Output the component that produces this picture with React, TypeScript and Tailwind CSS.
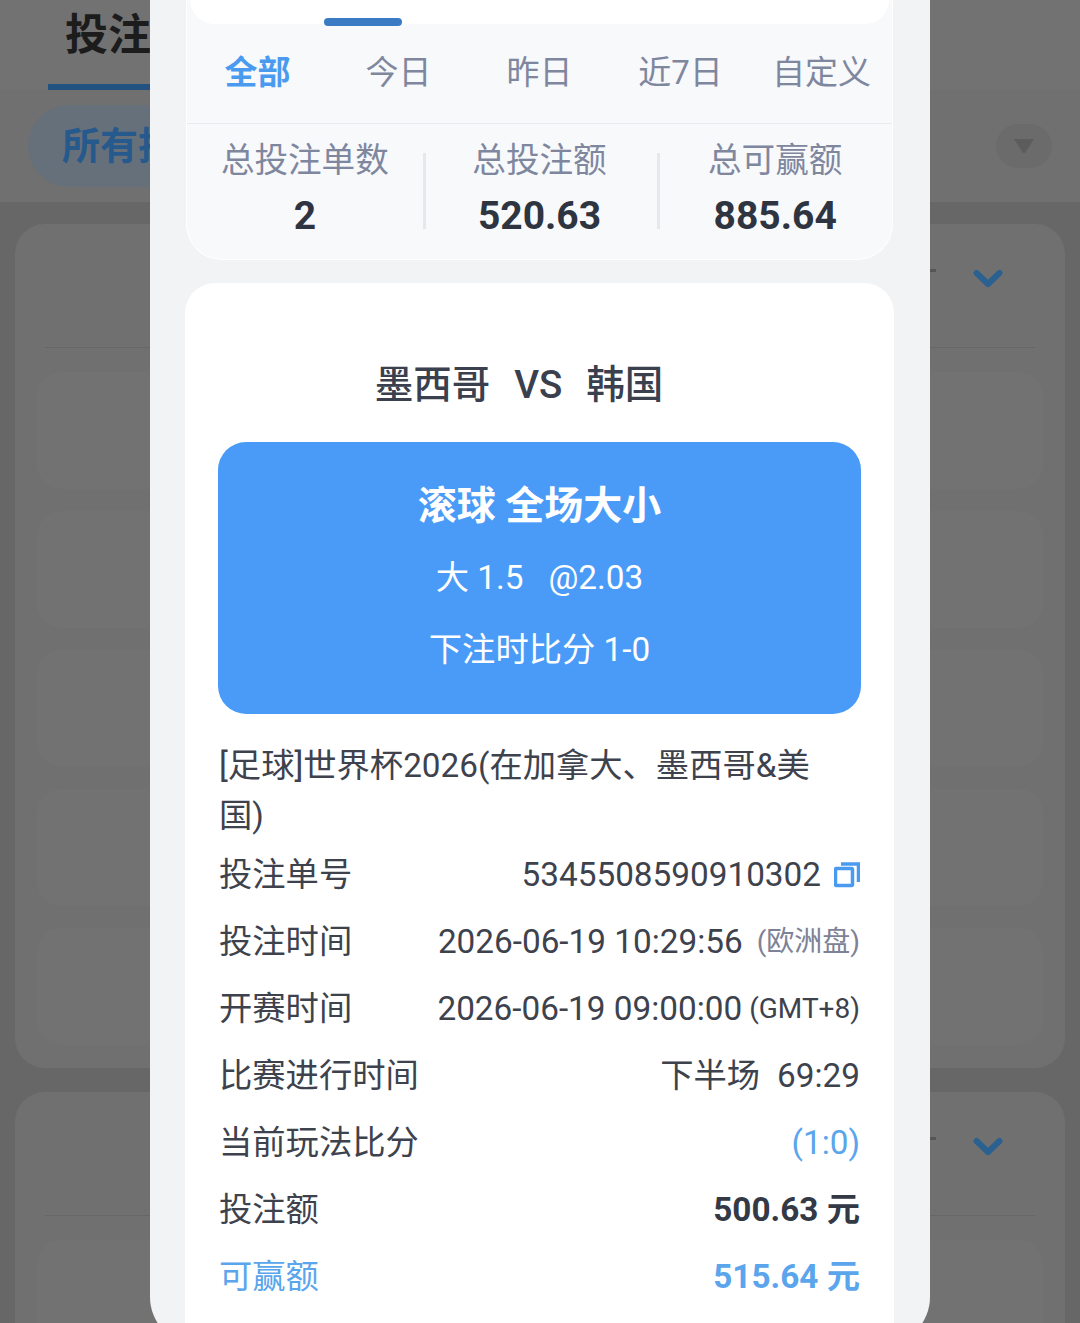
import React from 'react';

const tabs = ['全部', '今日', '昨日', '近7日', '自定义'];

const Chevron = () => (
  <svg width="30" height="20" viewBox="0 0 30 20" fill="none" stroke="#2a6191" strokeWidth="6" strokeLinecap="round" strokeLinejoin="round">
    <path d="M3.5 4l11.5 11L26.5 4" />
  </svg>
);

const CopyIcon = () => (
  <svg width="26" height="26" viewBox="0 0 26 26" fill="none" stroke="#4a9bf0" strokeWidth="3.5" className="ml-[13px]">
    <rect x="1.5" y="6.5" width="17" height="17" rx="1" />
    <path d="M7 2h17.5v18" />
  </svg>
);

const BackgroundCard = ({ rows }: { rows: number }) => (
  <div className="rounded-[30px] bg-[#707070] px-[22px] pb-[23px]">
    <div className="mx-[8px] flex h-[124px] items-start justify-end gap-[37px] border-b border-[#676767] pr-[32px] pt-[45px]">
      <div className="h-[3px] w-[8px] bg-[#555555]" />
      <Chevron />
    </div>
    <div className="flex flex-col gap-[22px] pt-[24px]">
      {Array.from({ length: rows }).map((_, i) => (
        <div key={i} className="h-[117px] rounded-[24px] bg-[#727272]" />
      ))}
    </div>
  </div>
);

const Row = ({ label, blue, children }: { label: string; blue?: boolean; children: React.ReactNode }) => (
  <div className={`flex h-[67px] items-center justify-between ${blue ? 'text-[#5aa5ec]' : 'text-[#3d424d]'}`}>
    <span>{label}</span>
    <div className="flex items-center">{children}</div>
  </div>
);

export default function App() {
  return (
    <div
      className="relative h-[1323px] w-[1080px] overflow-hidden bg-[#676768]"
      style={{ fontFamily: 'Roboto, "Noto Sans CJK SC", sans-serif' }}
    >
      {/* dimmed page behind the sheet */}
      <div className="h-[90px] bg-[#727272] pl-[48px]">
        <div className="h-[90px] w-[200px] whitespace-nowrap border-b-[6px] border-[#22527f] pl-[17px] text-[43px] font-bold leading-[70px] text-[#1c1c1c]">
          投注记录
        </div>
      </div>
      <div className="flex h-[112px] items-center justify-between bg-[#707070] pl-[28px] pr-[28px]">
        <div className="flex h-[82px] w-[300px] items-center whitespace-nowrap rounded-full bg-[#66707a] pl-[34px] text-[38px] font-bold text-[#26598c]">
          所有投注
        </div>
        <div className="flex h-[44px] w-[56px] items-center justify-center rounded-full bg-[#6b6b6b]">
          <svg width="22" height="16" viewBox="0 0 22 16" fill="#5c5c5e">
            <path d="M1 1h20L12 15h-2z" />
          </svg>
        </div>
      </div>
      <div className="flex flex-col gap-[24px] px-[15px] pt-[22px]">
        <BackgroundCard rows={5} />
        <BackgroundCard rows={1} />
      </div>

      {/* sheet */}
      <div className="absolute left-[150px] top-0 h-[1345px] w-[780px] overflow-hidden rounded-b-[48px] bg-[#f2f3f5]">
        <div className="relative ml-[36px] w-[707px] rounded-b-[36px] border border-t-0 border-white bg-[#f7f9fb]">
          <div className="mx-[3px] h-[24px] rounded-b-[36px] bg-white" />
          <div className="absolute left-[137px] top-[18px] h-[8px] w-[78px] rounded-full bg-[#3b7bc4]" />
          <div className="grid h-[100px] grid-cols-5 items-center border-b border-[#e8eaee] pb-[1px] text-center text-[33px] text-[#7f879f]">
            {tabs.map((t, i) => (
              <span key={t} className={i === 0 ? 'font-bold text-[#4a9bf0]' : ''}>
                {t}
              </span>
            ))}
          </div>
          <div className="flex h-[135px] text-center">
            <div className="w-[236px] pt-[13px]">
              <div className="text-[33.6px] leading-[48px] text-[#7f879f]">总投注单数</div>
              <div className="text-[39px] font-bold leading-[62px] text-[#2f3441]">2</div>
            </div>
            <div className="mt-[29px] h-[76px] w-[3px] bg-[#e6e8ec]" />
            <div className="w-[232px] pr-[4px] pt-[13px]">
              <div className="text-[33.6px] leading-[48px] text-[#7f879f]">总投注额</div>
              <div className="text-[39px] font-bold leading-[62px] text-[#2f3441]">520.63</div>
            </div>
            <div className="mt-[29px] h-[76px] w-[3px] bg-[#e6e8ec]" />
            <div className="w-[232px] pr-[2px] pt-[13px]">
              <div className="text-[33.6px] leading-[48px] text-[#7f879f]">总可赢额</div>
              <div className="text-[39px] font-bold leading-[62px] text-[#2f3441]">885.64</div>
            </div>
          </div>
        </div>

        <div className="ml-[35px] mt-[23px] w-[709px] rounded-[30px] bg-white px-[33px] pb-[60px]">
          <div className="flex h-[159px] items-start justify-center gap-[24px] pr-[41px] pt-[72px] text-[38.5px] font-medium leading-[60px] text-[#3a404d]">
            <span>墨西哥</span>
            <span>VS</span>
            <span>韩国</span>
          </div>
          <div className="h-[272px] rounded-[28px] bg-[#4a9bf7] pt-[28px] text-center leading-[72px] text-white">
            <div className="text-[39px] font-bold">滚球 全场大小</div>
            <div className="text-[33.3px]">
              大 1.5<span className="ml-[25px]">@2.03</span>
            </div>
            <div className="text-[33.3px]">下注时比分 1-0</div>
          </div>
          <div className="px-[1px] pt-[27px] text-[33.3px] text-[#3d424d]">
            <div className="max-w-[610px] leading-[50px]">[足球]世界杯2026(在加拿大、墨西哥&amp;美国)</div>
            <Row label="投注单号">
              <span>5345508590910302</span>
              <CopyIcon />
            </Row>
            <Row label="投注时间">
              <span>2026-06-19 10:29:56</span>
              <span className="ml-[14px] text-[28px] text-[#7d8296]">(欧洲盘)</span>
            </Row>
            <Row label="开赛时间">
              <span>2026-06-19 09:00:00</span>
              <span className="ml-[7px] text-[28px]">(GMT+8)</span>
            </Row>
            <Row label="比赛进行时间">
              <span>下半场</span>
              <span className="ml-[17px]">69:29</span>
            </Row>
            <Row label="当前玩法比分">
              <span className="text-[#5aa5ec]">(1:0)</span>
            </Row>
            <Row label="投注额">
              <span className="font-bold text-[#333a46]">500.63 元</span>
            </Row>
            <Row label="可赢额" blue>
              <span className="font-bold">515.64 元</span>
            </Row>
          </div>
        </div>
      </div>
    </div>
  );
}
